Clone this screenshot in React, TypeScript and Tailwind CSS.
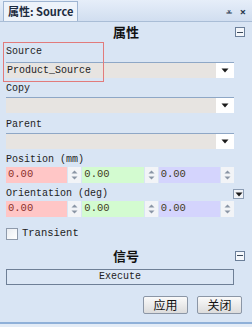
import React from "react";

const mono = { fontFamily: '"Liberation Mono", "Noto Sans CJK SC", monospace' };
const cjk = { fontFamily: '"Noto Sans CJK SC", "Noto Sans", sans-serif' };

function Collapse() {
  return (
    <div className="w-[10px] h-[10px] border border-[#6b7f99] bg-[#f4f7fb] flex items-center justify-center">
      <div className="w-[6px] h-[1px] bg-[#3c4a5c]" />
    </div>
  );
}

function Arrow() {
  return (
    <svg width="8" height="5" viewBox="0 0 8 5">
      <path d="M0.5 0.5 L7.5 0.5 L4 4.5 Z" fill="#1b1b1b" />
    </svg>
  );
}

function Combo({ value }: { value?: string }) {
  return (
    <div className="flex h-[16px] w-[228px] border-t border-[#8ea7c6] bg-[#e7e4e1]">
      <div className="flex-1 flex items-center pl-[1px] text-[10px] text-[#222]" style={mono}>
        {value}
      </div>
      <div className="w-[18px] bg-white flex items-center justify-center">
        <Arrow />
      </div>
    </div>
  );
}

function Spin() {
  return (
    <div className="w-[13px] h-full flex flex-col items-center justify-center gap-[2px] bg-[#f2f4f7]">
      <svg width="7" height="4" viewBox="0 0 7 4">
        <path d="M0.5 3.5 L3.5 0.5 L6.5 3.5 Z" fill="#8a95a5" />
      </svg>
      <svg width="7" height="4" viewBox="0 0 7 4">
        <path d="M0.5 0.5 L6.5 0.5 L3.5 3.5 Z" fill="#8a95a5" />
      </svg>
    </div>
  );
}

function Vec() {
  return (
    <div className="flex h-[16px] w-[228px] gap-[1px] text-[10.5px]" style={mono}>
      <div className="w-[62px] bg-[#ffc6c6] flex items-center pl-[2px] text-[#8a2f2a]">0.00</div>
      <Spin />
      <div className="w-[62px] bg-[#d3fbd0] flex items-center pl-[2px] text-[#3f3a1b]">0.00</div>
      <Spin />
      <div className="w-[62px] bg-[#d4d4fd] flex items-center pl-[2px] text-[#3f3a1b]">0.00</div>
      <Spin />
    </div>
  );
}

function Label({ text }: { text: string }) {
  return (
    <div className="h-[14px] flex items-center text-[10px] text-[#1e1e1e] leading-none" style={mono}>
      {text}
    </div>
  );
}

export default function App() {
  return (
    <div className="w-[252px] h-[327px] bg-[#d7e3f2] overflow-hidden flex flex-col">
      {/* tab strip */}
      <div className="h-[22px] flex items-end bg-gradient-to-b from-[#e6eef9] to-[#d1def0] border-b border-[#a9bdd6] pl-[3px] pr-[6px]">
        <div
          className="h-[20px] px-[4px] flex items-center bg-[#eef3fa] border border-b-0 border-[#9fb5d2] text-[11px] font-bold text-[#1d2b3f]"
          style={cjk}
        >
          属性: Source
        </div>
        <div className="flex-1" />
        <div className="h-[20px] flex items-center gap-[8px] text-[#2a3a50] text-[11px]">
          <span className="leading-none">⩡</span>
          <span className="leading-none font-bold">×</span>
        </div>
      </div>

      {/* body */}
      <div className="flex-1 flex flex-col px-[6px] bg-[#d9e5f4]">
        <div className="h-[20px] flex items-center relative">
          <div className="flex-1 text-center text-[13px] font-bold text-[#111]" style={cjk}>
            属性
          </div>
          <div className="absolute right-[1px] top-[5px]">
            <Collapse />
          </div>
        </div>

        <div className="relative">
          <div className="absolute -left-[3px] top-[0px] w-[101px] h-[40px] border border-[#e27b7b]" />
          <div className="pt-[3px]">
            <Label text="Source" />
          </div>
          <div className="mt-[3px]">
            <Combo value="Product_Source" />
          </div>
        </div>

        <div className="mt-[4px]">
          <Label text="Copy" />
        </div>
        <div className="mt-[1px]">
          <Combo />
        </div>

        <div className="mt-[5px]">
          <Label text="Parent" />
        </div>
        <div className="mt-[1px]">
          <Combo />
        </div>

        <div className="mt-[4px]">
          <Label text="Position (mm)" />
        </div>
        <Vec />

        <div className="mt-[4px] flex items-center">
          <Label text="Orientation (deg)" />
          <div className="flex-1" />
          <div className="w-[11px] h-[10px] mr-[2px] border border-[#8c9db4] bg-[#f0f3f8] flex items-center justify-center">
            <Arrow />
          </div>
        </div>
        <Vec />

        <div className="mt-[9px] flex items-center gap-[4px]">
          <div className="w-[12px] h-[12px] border border-[#8e9aab] bg-gradient-to-br from-[#e9edf2] to-[#ffffff]" />
          <span className="text-[10.5px] text-[#222]" style={mono}>
            Transient
          </span>
        </div>

        <div className="h-[20px] mt-[4px] flex items-center relative">
          <div className="flex-1 text-center text-[13px] font-bold text-[#111]" style={cjk}>
            信号
          </div>
          <div className="absolute right-[1px] top-[5px]">
            <Collapse />
          </div>
        </div>

        <div
          className="mt-[3px] w-[228px] h-[16px] border border-[#6e7f96] bg-[#dce7f5] flex items-center justify-center text-[10px] text-[#222]"
          style={mono}
        >
          Execute
        </div>

        <div className="mt-[11px] flex justify-end gap-[9px] pr-[4px]">
          <button
            className="w-[45px] h-[18px] border border-[#8b96a6] rounded-[2px] bg-gradient-to-b from-[#fafafa] to-[#dcdcdc] text-[12px] text-[#111] leading-none"
            style={cjk}
          >
            应用
          </button>
          <button
            className="w-[45px] h-[18px] border border-[#8b96a6] rounded-[2px] bg-gradient-to-b from-[#fafafa] to-[#dcdcdc] text-[12px] text-[#111] leading-none"
            style={cjk}
          >
            关闭
          </button>
        </div>
        <div className="flex-1" />
      </div>
      <div className="h-[2px] bg-[#8fb0d8]" />
      <div className="h-[3px] bg-[#e4ecf6]" />
    </div>
  );
}
